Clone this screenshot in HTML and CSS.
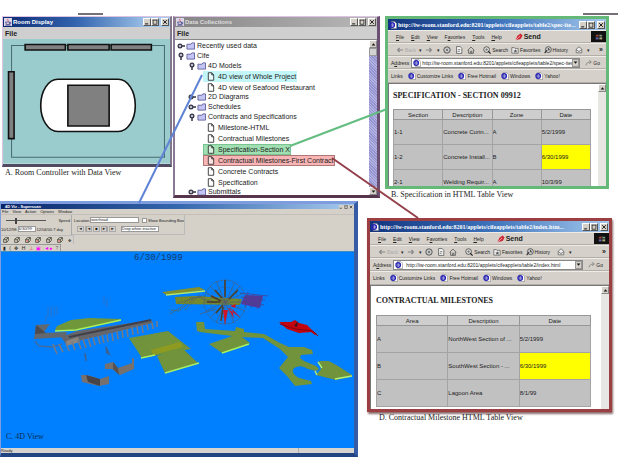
FILE: index.html
```html
<!DOCTYPE html>
<html lang="en">
<head>
<meta charset="utf-8">
<title>Room Display</title>
<link rel="stylesheet" href="styles.css">
</head>
<body>
<svg class="sprites" aria-hidden="true">
  <symbol id="folder" viewBox="0 0 10 9"><path d="M1 8V2.500h4.500l1-1.500h3V8z" fill="#c4c4f4" stroke="#5c5c9c"/></symbol>
  <symbol id="doc" viewBox="0 0 8 10"><path d="M1 .8h3.800L7 3.200V9.200H1zM4.800 1v2.200H7" fill="#fff" fill-opacity=".6" stroke="#333"/></symbol>
  <symbol id="closed" viewBox="0 0 8 8"><circle cx="3" cy="4" r="1.900" fill="#bbc" stroke="#334" stroke-width="1.200"/><path d="M5 4h3" stroke="#334" stroke-width="1.500"/></symbol>
  <symbol id="open" viewBox="0 0 8 8"><circle cx="4" cy="3" r="1.900" fill="#bbc" stroke="#334" stroke-width="1.200"/><path d="M4 5v3" stroke="#334" stroke-width="1.500"/></symbol>
  <symbol id="page" viewBox="0 0 10 10"><path d="M3 .5h4L9.500 3v6.500H3z" fill="#fff" stroke="#777" stroke-width=".7"/><circle cx="4" cy="5" r="2.800" fill="none" stroke="#2722b8" stroke-width="1.600"/><path d="M2 5h4.500" stroke="#2722b8" stroke-width="1.200"/></symbol>
  <symbol id="cup" viewBox="0 0 10 10"><path d="M0 0h10v10H0z" fill="#dcd6e6"/><path d="M5 1c-2 2 2 2 0 4" stroke="#d3445a" fill="none"/><path d="M2 5h5v3H3zM7 5.500h1.500v1.500H7M1.500 9h7" stroke="#4a4a8a" fill="none"/></symbol>
  <symbol id="min" viewBox="0 0 8 8"><path d="M1.500 6.500h4" stroke="#222" stroke-width="1.400"/></symbol>
  <symbol id="max" viewBox="0 0 8 8"><path d="M1 1.500h6M1.500 1v6h5V1" stroke="#222" fill="none"/></symbol>
  <symbol id="close" viewBox="0 0 8 8"><path d="M1.500 1.500l5 5M6.500 1.500l-5 5" stroke="#222" stroke-width="1.300"/></symbol>
  <symbol id="down" viewBox="0 0 8 8"><path d="M1 2.500h6L4 6z" fill="#111"/></symbol>
  <symbol id="up" viewBox="0 0 8 8"><path d="M1 5.500h6L4 2z" fill="#111"/></symbol>
  <symbol id="left" viewBox="0 0 10 8"><path d="M9 4H2M4.500 1.500L2 4l2.500 2.500" fill="none" stroke="#888" stroke-width="1.500"/></symbol>
  <symbol id="right" viewBox="0 0 10 8"><path d="M1 4h7M5.500 1.500L8 4 5.500 6.500" fill="none" stroke="#888" stroke-width="1.500"/></symbol>
  <symbol id="stop" viewBox="0 0 10 10"><circle cx="5" cy="5" r="4" fill="#ccc" stroke="#555" stroke-width="1.200"/><path d="M3.500 3.500l3 3M6.500 3.500l-3 3" stroke="#666"/></symbol>
  <symbol id="refresh" viewBox="0 0 10 10"><path d="M2 .8h4.500L8.500 3v6.200H2z" fill="#fff" stroke="#555"/><path d="M3.500 4.500h3L5.500 3.500M6.500 6.500h-3l1 1" stroke="#555" fill="none" stroke-width=".8"/></symbol>
  <symbol id="home" viewBox="0 0 10 10"><path d="M.8 5.500L5 1.300l4.200 4.200M2 5v4.200h6V5M4.500 9V6.500H6V9" fill="none" stroke="#555"/></symbol>
  <symbol id="search" viewBox="0 0 10 10"><circle cx="4.500" cy="4.500" r="3.600" fill="#ddd" stroke="#444"/><path d="M3 4.500h3M4.500 3v3" stroke="#666"/><path d="M6.500 6.500L9.500 9.500" stroke="#222" stroke-width="1.500"/></symbol>
  <symbol id="fav" viewBox="0 0 10 10"><path d="M1 2h3l1 1h4v6H1z" fill="#eee" stroke="#666"/><path d="M5.500 4l.8 1.600 1.700.1-1.300 1.100.4 1.700-1.600-.9-1.500.9.3-1.700L3 5.700l1.800-.1z" fill="#555"/></symbol>
  <symbol id="history" viewBox="0 0 10 10"><circle cx="5.500" cy="4.500" r="3.700" fill="#ccc" stroke="#444"/><path d="M5.500 2.500v2.300h2" stroke="#222" fill="none"/><path d="M.8 8.800l3-3.800" stroke="#333" stroke-width="1.500"/></symbol>
  <symbol id="mail" viewBox="0 0 10 10"><path d="M1.500 4L5 1l3.500 3v4.500h-7z" fill="#eee" stroke="#666"/><path d="M1.500 4.500L5 7l3.500-2.500" fill="none" stroke="#666"/></symbol>
  <symbol id="go" viewBox="0 0 12 10"><path d="M1.500 8.500C2 5 4 3.500 9 3.500M6.500 1L9.500 3.500 6.500 6" fill="none" stroke="#777" stroke-width="1.200"/></symbol>
  <symbol id="quill" viewBox="0 0 10 10"><path d="M.5 9.500L3 3.500 7 .5 9.500 3 7 7.500 3 8.500z" fill="#cf2531"/><path d="M.5 9.500l6-6" stroke="#fff" stroke-width=".7"/></symbol>
  <symbol id="flag" viewBox="0 0 10 8"><path d="M1 1.500L4.500 1v2.500H1z" fill="#a44"/><path d="M5.500 1L9 1.500v2H5.500z" fill="#798"/><path d="M1 4.500h3.500V7H1z" fill="#66a"/><path d="M5.500 4.500H9V7H5.500z" fill="#aa7"/></symbol>
  <symbol id="cube" viewBox="0 0 10 10"><path d="M1 4h5v5H1z" fill="#e5e0d8"/><path d="M1 4l3-3h5L6 4zM1 4v5h5V4M9 1v5L6 9" fill="none" stroke="#443" stroke-width="1.300"/><path class="face" d="M2.500 5.500h2v2h-2z"/></symbol>
</svg>

<main class="desktop">
  <i class="edge edge-left"></i>
  <i class="edge edge-right"></i>

  <section class="frame room">
    <header class="bar bar-java">
      <svg class="app"><use href="#cup"/></svg><span class="name">Room Display</span>
      <button class="ctl" aria-label="Minimize"><svg><use href="#min"/></svg></button><button class="ctl" aria-label="Maximize"><svg><use href="#max"/></svg></button><button class="ctl ctl-close" aria-label="Close"><svg><use href="#close"/></svg></button>
    </header>
    <nav class="menu-java"><button>File</button></nav>
    <svg class="plan" viewBox="0 0 166 124" role="img" aria-label="Room plan">
      <path d="M0 0h166v124H0z" fill="#9accce"/>
      <path d="M8.500 6.500h152v111h-152z" fill="none" stroke="#486b70"/>
      <g fill="#808080" stroke="#111" stroke-width="1.600">
        <path d="M22 5.500h40v5.500H22zM64.500 5.500h41v5.500h-41zM107.500 5.500h40v5.500h-40zM5.500 32.500h5.500V99H5.500z"/>
        <rect x="37.500" y="40" width="94" height="52" rx="17" ry="26" fill="#fff"/>
        <path d="M64.500 46h41v40.500h-41z"/>
      </g>
    </svg>
  </section>
  <p class="caption cap-a">A. Room Controller with Data View</p>

  <section class="frame data">
    <header class="bar bar-idle">
      <svg class="app"><use href="#cup"/></svg><span class="name">Data Collections</span>
      <button class="ctl" aria-label="Minimize"><svg><use href="#min"/></svg></button><button class="ctl" aria-label="Maximize"><svg><use href="#max"/></svg></button><button class="ctl ctl-close" aria-label="Close"><svg><use href="#close"/></svg></button>
    </header>
    <nav class="menu-java"><button>File</button></nav>
    <div class="pane">
      <ul class="tree">
        <li><div class="row"><svg class="knob"><use href="#closed"/></svg><svg class="folder"><use href="#folder"/></svg>Recently used data</div></li>
        <li><div class="row"><svg class="knob"><use href="#open"/></svg><svg class="folder"><use href="#folder"/></svg>Cife</div>
          <ul class="branch">
            <li><div class="row"><svg class="knob"><use href="#open"/></svg><svg class="folder"><use href="#folder"/></svg>4D Models</div>
              <ul class="leaves">
                <li><span class="leaf mark-blue"><svg><use href="#doc"/></svg>4D view of Whole Project</span></li>
                <li><span class="leaf"><svg><use href="#doc"/></svg>4D view of Seafood Restaurant</span></li>
              </ul></li>
            <li><div class="row"><svg class="knob"><use href="#closed"/></svg><svg class="folder"><use href="#folder"/></svg>2D Diagrams</div></li>
            <li><div class="row"><svg class="knob"><use href="#closed"/></svg><svg class="folder"><use href="#folder"/></svg>Schedules</div></li>
            <li><div class="row"><svg class="knob"><use href="#open"/></svg><svg class="folder"><use href="#folder"/></svg>Contracts and Specifications</div>
              <ul class="leaves">
                <li><span class="leaf"><svg><use href="#doc"/></svg>Milestone-HTML</span></li>
                <li><span class="leaf"><svg><use href="#doc"/></svg>Contractual Milestones</span></li>
                <li><span class="leaf mark-green"><svg><use href="#doc"/></svg>Specification-Section X</span></li>
                <li><span class="leaf mark-red"><svg><use href="#doc"/></svg>Contractual Milestones-First Contract</span></li>
                <li><span class="leaf"><svg><use href="#doc"/></svg>Concrete Contracts</span></li>
                <li><span class="leaf"><svg><use href="#doc"/></svg>Specification</span></li>
              </ul></li>
            <li><div class="row"><svg class="knob"><use href="#closed"/></svg><svg class="folder"><use href="#folder"/></svg>Submittals</div></li>
          </ul></li>
      </ul>
      <div class="scroll scroll-java"><button aria-label="Scroll up"><svg><use href="#up"/></svg></button><i class="thumb"></i><i class="track"></i><button aria-label="Scroll down"><svg><use href="#down"/></svg></button></div>
    </div>
  </section>

  <section class="browser spec">
    <header class="bar bar-ie">
      <svg class="app"><use href="#page"/></svg><span class="name">http://iw-room.stanford.edu:8201/applets/cifeapplets/table2/spec-ite...</span>
      <button class="ctl" aria-label="Minimize"><svg><use href="#min"/></svg></button><button class="ctl" aria-label="Maximize"><svg><use href="#max"/></svg></button><button class="ctl ctl-close" aria-label="Close"><svg><use href="#close"/></svg></button>
    </header>
    <nav class="strip menus"><button><u>F</u>ile</button><button><u>E</u>dit</button><button><u>V</u>iew</button><button>F<u>a</u>vorites</button><button><u>T</u>ools</button><button><u>H</u>elp</button><button class="send"><svg><use href="#quill"/></svg>Send</button><span class="throbber"><svg><use href="#flag"/></svg></span></nav>
    <div class="strip tools"><button class="dim"><svg><use href="#left"/></svg>Back</button><i>▾</i><button aria-label="Forward"><svg><use href="#right"/></svg></button><i>▾</i><button aria-label="Stop"><svg><use href="#stop"/></svg></button><button aria-label="Refresh"><svg><use href="#refresh"/></svg></button><button aria-label="Home"><svg><use href="#home"/></svg></button><button class="lead"><svg><use href="#search"/></svg>Search</button><button><svg><use href="#fav"/></svg>Favorites</button><button><svg><use href="#history"/></svg>History</button><button class="lead" aria-label="Mail"><svg><use href="#mail"/></svg></button><i>▾</i><b>»</b></div>
    <div class="strip address"><label for="url-spec">A<u>d</u>dress</label><span class="field"><svg><use href="#page"/></svg><input id="url-spec" value="http://iw-room.stanford.edu:8201/applets/cifeapplets/table2/spec-items.htm"><button aria-label="Show addresses"><svg><use href="#down"/></svg></button></span><button class="go"><svg><use href="#go"/></svg>Go</button></div>
    <nav class="strip links"><span>Links</span><a href="#"><svg><use href="#page"/></svg>Customize Links</a><a href="#"><svg><use href="#page"/></svg>Free Hotmail</a><a href="#"><svg><use href="#page"/></svg>Windows</a><a href="#"><svg><use href="#page"/></svg>Yahoo!</a></nav>
    <div class="view">
      <article>
        <h2>SPECIFICATION - SECTION 09912</h2>
        <table>
          <thead><tr><th>Section</th><th>Description</th><th>Zone</th><th>Date</th></tr></thead>
          <tbody>
            <tr><td>1-1</td><td>Concrete Curin...</td><td>A</td><td>5/2/1999</td></tr>
            <tr><td>1-2</td><td>Concrete Install...</td><td>B</td><td class="today">6/30/1999</td></tr>
            <tr><td>2-1</td><td>Welding Requir...</td><td>A</td><td>10/3/99</td></tr>
          </tbody>
        </table>
      </article>
      <div class="scroll"><button aria-label="Scroll up"><svg><use href="#up"/></svg></button><i class="track"></i></div>
    </div>
  </section>
  <p class="caption cap-b">B. Specification in HTML Table View</p>

  <section class="browser milestones">
    <header class="bar bar-ie">
      <svg class="app"><use href="#page"/></svg><span class="name">http://iw-room.stanford.edu:8201/applets/cifeapplets/table2/index.htm...</span>
      <button class="ctl" aria-label="Minimize"><svg><use href="#min"/></svg></button><button class="ctl" aria-label="Maximize"><svg><use href="#max"/></svg></button><button class="ctl ctl-close" aria-label="Close"><svg><use href="#close"/></svg></button>
    </header>
    <nav class="strip menus"><button><u>F</u>ile</button><button><u>E</u>dit</button><button><u>V</u>iew</button><button>F<u>a</u>vorites</button><button><u>T</u>ools</button><button><u>H</u>elp</button><button class="send"><svg><use href="#quill"/></svg>Send</button><span class="throbber"><svg><use href="#flag"/></svg></span></nav>
    <div class="strip tools"><button class="dim"><svg><use href="#left"/></svg>Back</button><i>▾</i><button aria-label="Forward"><svg><use href="#right"/></svg></button><i>▾</i><button aria-label="Stop"><svg><use href="#stop"/></svg></button><button aria-label="Refresh"><svg><use href="#refresh"/></svg></button><button aria-label="Home"><svg><use href="#home"/></svg></button><button class="lead"><svg><use href="#search"/></svg>Search</button><button><svg><use href="#fav"/></svg>Favorites</button><button><svg><use href="#history"/></svg>History</button><button class="lead" aria-label="Mail"><svg><use href="#mail"/></svg></button><i>▾</i><b>»</b></div>
    <div class="strip address"><label for="url-mile">A<u>d</u>dress</label><span class="field"><svg><use href="#page"/></svg><input id="url-mile" value="http://iw-room.stanford.edu:8201/applets/cifeapplets/table2/index.html"><button aria-label="Show addresses"><svg><use href="#down"/></svg></button></span><button class="go"><svg><use href="#go"/></svg>Go</button></div>
    <nav class="strip links"><span>Links</span><a href="#"><svg><use href="#page"/></svg>Customize Links</a><a href="#"><svg><use href="#page"/></svg>Free Hotmail</a><a href="#"><svg><use href="#page"/></svg>Windows</a><a href="#"><svg><use href="#page"/></svg>Yahoo!</a></nav>
    <div class="view">
      <article>
        <h2>CONTRACTUAL MILESTONES</h2>
        <table>
          <thead><tr><th>Area</th><th>Description</th><th>Date</th></tr></thead>
          <tbody>
            <tr><td>A</td><td>NorthWest Section of ...</td><td>5/2/1999</td></tr>
            <tr><td>B</td><td>SouthWest Section - ...</td><td class="today">6/30/1999</td></tr>
            <tr><td>C</td><td>Lagoon Area</td><td>8/1/99</td></tr>
          </tbody>
        </table>
      </article>
      <div class="scroll"><button aria-label="Scroll up"><svg><use href="#up"/></svg></button><i class="track"></i></div>
    </div>
  </section>
  <p class="caption cap-d">D. Contractual Milestone HTML Table View</p>

  <section class="model">
    <header class="bar-model"><span>4D Viz - Superscan</span><button aria-label="Minimize"><svg><use href="#min"/></svg></button><button aria-label="Maximize"><svg><use href="#max"/></svg></button><button aria-label="Close"><svg><use href="#close"/></svg></button></header>
    <nav class="model-menu"><button>File</button><button>View</button><button>Action</button><button>Options</button><button>Window</button></nav>
    <div class="panels">
      <div class="time">
        <div class="slide"><input type="range" min="0" max="100" value="24" aria-label="Time"><span>Speed</span></div>
        <div class="dates"><span>10/12/98</span><select aria-label="Date"><option>6/30/99</option></select><span>12/04/00</span><span>7 day</span></div>
      </div>
      <div class="play">
        <div class="pick"><label for="loc">Location</label><select id="loc"><option>overhead</option></select><input type="checkbox" id="box"><label for="box">Show Bounding Box</label></div>
        <div class="pick transport"><button aria-label="Rewind">◄</button><button aria-label="Back">|◄</button><button aria-label="Stop">■</button><button aria-label="Next">►|</button><button aria-label="Play">►</button><select aria-label="Drawing"><option>Drop when inactive</option></select></div>
      </div>
    </div>
    <div class="cubes"><button aria-label="Front"><svg><use href="#cube"/></svg></button><button aria-label="Side"><svg><use href="#cube"/></svg></button><button class="hot" aria-label="Top"><svg><use href="#cube"/></svg></button><button class="hot" aria-label="Back"><svg><use href="#cube"/></svg></button><button aria-label="Left"><svg><use href="#cube"/></svg></button><button class="hot" aria-label="Bottom"><svg><use href="#cube"/></svg></button><button aria-label="Fit">✥</button></div>
    <div class="modes"><button>▮</button><button>⟨</button><button>✥</button><button>H</button><button class="red">⊥</button><button class="pink">▣</button><button class="pink">◄●</button><button class="help">?</button></div>
    <svg class="scene" viewBox="1 251 353 197" role="img" aria-label="Construction model">
      <path d="M1 251h353v197H1z" fill="#007fff"/>
      <path d="M1 251.500h353" stroke="#3e8cc4"/>
      <text x="134" y="260" class="stamp">6/30/1999</text>
      <g stroke="#3f6fae" stroke-width=".7"><path d="M48 307v9M51 306v12M54 306v10M57 307v8M47 315l-2 8M104 296v9M107 299v8"/></g>
      <path d="M36 325l14-1-7 9 24-1-1 5-32 2z" fill="#62686f"/><path d="M36 325l10 8-11 1z" fill="#4c4b50"/>
      <path d="M35 341l4 5 13 1 10-3" fill="none" stroke="#426b9e" stroke-width="1.300"/>
      <path d="M55 330l2-4 14-6 18-2 32 1-1 2-44 9-20 1z" fill="#70983b"/>
      <path d="M55 331l21-1 45-10" fill="none" stroke="#a9ef5b" stroke-width="1.500"/>
      <path d="M61 337l16-6 74-11 2 3-87 21z" fill="#65666c"/><path d="M69 337L151 320" stroke="#413f48" stroke-width="2"/><path d="M66 341l12-4 2 5-14 4z" fill="#8b8580"/>
      <path d="M53 344l4 10M59 344l4 8M66 343l3 8M72 342l3 8M78 340l3 9M83 339l3 9M88 338l3 9M93 337l2 8M98 336l2 8M102 335l2 8M107 334l1 8M112 333l1 8M117 331l1 8M122 330l1 8M127 329l1 8M132 327l1 8M137 326l1 8M142 325l1 8M147 324l1 6M152 323l1 6M157 321v6" stroke="#747a85" stroke-width="1.600"/>
      <path d="M85 353l1 8M106 347l3 7-2-1z" stroke="#3d618f" stroke-width="1.500"/>
      <path d="M81 375l6 0 13 4 9-3v8l-10 2-17-4z" fill="#77716e"/><path d="M86 375l14 4v7l-12-4z" fill="#474449"/>
      <path d="M105 364l8-2 5 6 14-5 0-5 2 1v10l-14 6-8-6-7 0z" fill="#77716e"/><path d="M113 362l5 6 1 7-6-6z" fill="#57524f"/>
      <path d="M129 338l39-7 23 18-49 9z" fill="#70933b"/><path d="M157 356l24-9 17 16-33 10z" fill="#70933b"/>
      <path d="M151 350l29-8 3 5-30 8z" fill="#8f9b20"/><path d="M141 358l14-3M165 373l34-10" stroke="#a8ee60" stroke-width="1.500"/>
      <path d="M162 292l37-5 6 3-39 5z" fill="#82902d"/><path d="M166 295l39-4" stroke="#b0e66a" stroke-width="1.400"/>
      <path d="M175 297l20-1 47 3-2 6-64-1z" fill="#75882c"/>
      <path d="M170 314l10-6 10-10 16-2M171 310l8 1 14-12M178 303l24-7M185 310l15-16" fill="none" stroke="#56655e" stroke-dasharray="2 1"/>
      <g fill="none" stroke="#505d70" stroke-width=".7"><ellipse cx="225" cy="302" rx="21" ry="22" stroke-dasharray="3 1"/><ellipse cx="225" cy="302" rx="14" ry="15" stroke-dasharray="1 1"/><path d="M225 280v44M204 302h42M210 286l30 32M240 286l-30 32M216 281l18 42M235 282l-19 41M206 293l39 18M206 311l38-18M216 303l-18-6M216 309l-16 5"/></g>
      <path d="M225 280v17M211 296l10 5M215 290l7 8M216 313l7-8M207 302h13M238 290l-9 9M221 321l2-14" stroke="#4d3d24" stroke-width="1.500"/>
      <path d="M223 310l5 0-3 15zM227 308l5 1 9 9zM230 306l6-2-1 4zM229 310l5 9-2-10z" fill="#cd1527"/>
      <path d="M245 295l18 1-3 12-19-4z" fill="#56389c"/><path d="M240 293l28 3M241 297l24 3M243 302l21 3M248 292l-3 15M254 294l-3 14M260 295l-3 14" stroke="#45458a" stroke-width=".8"/>
      <path d="M279 322l12 0 4-2 4 3 8 2 6 6 4 3-2 1-4-3-12 1-12-4z" fill="#c3030d"/><path d="M280 324l15 5 18 2M313 331l5 5" fill="none" stroke="#840515"/><path d="M294 326l4-5-1 6z" fill="#40141d"/>
      <path d="M196 322L204 322 205 329 235 331 236 327 244 329 244 332 264 334 280 343 289 347 304 347 312 350 313 354 301 355 300 358 304 361 316 366 319 369 316 371 308 369Q301 364 294 368Q290 373 299 378L311 381 312 384 295 386 287 376 279 368 288 357 280 349 263 338 240 337 200 332 197 331z" fill="#70933b"/>
      <path d="M209 344l29-10 12 9-28 10z" fill="#70933b"/><path d="M222 353l27-9" stroke="#a9ef5b" stroke-width="1.500"/>
      <path d="M319 361l10 0 9 5 14 9v1l-16 4-20-5 5-6z" fill="#70933b"/><path d="M318 362l4 6M315 371l2 4M335 379l17-3" stroke="#b1f274" stroke-width="1.400"/>
      <text x="6" y="439" class="scene-caption">C. 4D View</text>
    </svg>
    <footer><span>Ready</span><i></i></footer>
  </section>

  <svg class="lines" aria-hidden="true">
    <path d="M202 75L139 203" stroke="#5f83d6"/>
    <path d="M290 146l97-37" stroke="#63bd80"/>
    <path d="M332 158l86 60" stroke="#93404a"/>
  </svg>
</main>
</body>
</html>
```
FILE: styles.css
```css
* { box-sizing: border-box; }
body { margin: 0; background: #fff; color: #222; font-family: "Liberation Sans", sans-serif; font-size: 6px; }
button, input, select { margin: 0; padding: 0; border: 0; border-radius: 0; background: none; color: inherit; font: inherit; }
button, a { display: inline-flex; align-items: center; white-space: nowrap; }
a { color: inherit; text-decoration: none; }
ul { margin: 0; padding: 0; list-style: none; }
i { font-style: normal; }
svg { flex: none; }
.sprites { position: absolute; width: 0; height: 0; }

.desktop { position: relative; min-height: 100vh; overflow: hidden; }
.edge { position: absolute; top: 13px; height: 2px; background: #777079; }
.edge-left { left: 78px; width: 25px; }
.edge-right { left: 583px; width: 35px; }

.frame, .browser, .model { position: absolute; display: flex; flex-direction: column; }
.room { left: 2px; top: 16px; width: 170px; border: 1px solid #dcc4e2; border-right: 2px solid #80788a; border-bottom: 3px solid #504b62; }
.data { left: 173px; top: 16px; width: 207px; height: 182px; border: 1px solid #dcc4e2; border-right: 3px solid #6b4f72; border-bottom: 3px solid #57354c; border-left: 2px solid #8b7894; }
.spec { left: 385px; top: 16px; width: 224px; height: 173px; border: 3px solid #64b878; }
.milestones { left: 367px; top: 218px; width: 245px; height: 194px; border: 3px solid #9b3f43; box-shadow: 1px 2px 2px #8a6a6a; }

.bar { display: flex; align-items: center; height: 10px; padding: 0 1px; color: #fff; font-weight: bold; }
.bar .app { width: 8px; height: 8px; margin-right: 1px; }
.bar .name { flex: 1; overflow: hidden; white-space: nowrap; }
.bar-java { background: linear-gradient(90deg, #0b2a74, #3566b0 45%, #a5c9ec 90%); }
.bar-idle { background: linear-gradient(90deg, #858585, #b9b9b9); color: #ddd; }
.bar-ie { height: 11px; background: linear-gradient(90deg, #12357f, #3d73bb 50%, #a4c8ec); font: bold 6px "Liberation Serif", serif; }
.ctl { flex: none; justify-content: center; width: 8px; height: 8px; background: #d4d0c8; border: 1px solid; border-color: #fff #555 #555 #fff; }
.ctl svg { width: 6px; height: 6px; }
.ctl-close { margin-left: 2px; }
.menu-java { display: flex; align-items: center; height: 12px; padding: 0 2px; background: #cfcfcf; font-weight: bold; font-size: 7px; }
.plan { display: block; width: 100%; height: auto; }

.pane { display: flex; flex: 1; min-height: 0; background: #fff; border-top: 1px solid #888; overflow: hidden; }
.tree { flex: 1; padding-top: 1px; font-size: 7px; line-height: 10px; white-space: nowrap; }
.row { display: flex; align-items: center; height: 10px; padding-left: 2px; }
.knob { width: 8px; height: 8px; margin-right: 1px; }
.folder { width: 9px; height: 8px; margin-right: 2px; }
.branch { padding-left: 11px; }
.leaves { display: flex; flex-direction: column; gap: 1px; padding-left: 17px; }
.leaves li { display: flex; height: 10px; align-items: center; }
.leaf { display: inline-flex; align-items: center; padding: 1px 1px 1px 4px; line-height: 9px; }
.leaf svg { width: 8px; height: 9px; margin-right: 3px; }
.mark-blue { background: #c3f6f8; }
.mark-green { background: #9fdfb1; outline: 1px solid #79c391; outline-offset: -1px; }
.mark-red { background: #f9b5b5; outline: 1px solid #b07777; outline-offset: -1px; }
.scroll { display: flex; flex: none; flex-direction: column; width: 8px; background: #e8e6e2; }
.scroll button { justify-content: center; width: 8px; height: 8px; background: #d4d0c8; border: 1px solid; border-color: #fff #888 #888 #fff; }
.scroll svg { width: 5px; height: 5px; }
.scroll .track { flex: 1; }
.scroll .thumb { height: 8px; background: #d2d2d2; border: 1px solid #999; }
.scroll-java .track { background: repeating-linear-gradient(45deg, #9494d0 0 1px, #b2b2e2 1px 2px); }

.strip { display: flex; flex: none; align-items: center; height: 13px; padding: 0 3px; background: #d5d1ca; border-top: 1px solid #eeece8; border-bottom: 1px solid #b3afa8; font-size: 5px; white-space: nowrap; }
.strip svg { width: 8px; height: 8px; }
.menus { gap: 7px; padding: 0 0 0 8px; }
.menus .send { gap: 1px; margin-left: 6px; font-size: 7px; font-weight: bold; }
.throbber { display: flex; align-items: center; justify-content: center; width: 15px; height: 11px; margin-left: auto; background: #111; }
.tools { gap: 3px; padding-left: 8px; }
.tools svg { margin-right: 1px; }
.tools .dim { color: #aaa; }
.tools .lead { margin-left: 4px; }
.tools b { margin-left: auto; font-size: 7px; }
.address { gap: 2px; }
.field { display: flex; flex: 1; align-items: center; min-width: 0; height: 10px; padding-left: 1px; background: #fff; border: 1px solid #888; }
.field input { flex: 1; width: 0; height: 8px; margin-left: 3px; outline: 0; }
.field button { justify-content: center; width: 7px; height: 8px; background: #d4d0c8; border: 1px solid #999; }
.field button svg { width: 5px; height: 5px; }
.spec .field input { margin-left: 1px; }
.address .go { margin: 0 3px; }
.links { height: 14px; gap: 5px; }
.links a { gap: 1px; }

.view { display: flex; flex: 1; min-height: 0; overflow: hidden; background: #fff; border-top: 1px solid #777; border-left: 1px solid #777; }
.view article { flex: 1; min-width: 0; padding: 0 7px 0 4px; }
.view h2 { margin: 7px 0 9px; font: bold 8px/9px "Liberation Serif", serif; white-space: nowrap; }
.view table { width: 100%; border-collapse: collapse; table-layout: fixed; background: #c1c1c1; }
.view th { height: 10px; padding: 0; border: 1px solid #979797; background: #cecece; font-weight: normal; }
.view td { height: 25px; padding: 0; border: 1px solid #a4a4a4; overflow: hidden; white-space: nowrap; }
.view .today { background: #ff0; }
.milestones .view article { padding: 0 10px 0 5px; }
.milestones .view h2 { margin: 10px 0; }
.milestones .view td { height: 27px; }

.caption { position: absolute; margin: 0; font: 8px/10px "Liberation Serif", serif; white-space: nowrap; }
.cap-a { left: 5px; top: 168px; }
.cap-b { left: 391px; top: 190px; }
.cap-d { left: 379px; top: 413px; }

.model { left: 0; top: 201px; width: 358px; background: #d5d1c9; border: 3px solid #7e9ddf; border-width: 3px 4px 4px 1px; border-right-color: #375ca6; border-bottom-color: #234482; font-size: 4px; white-space: nowrap; }
.bar-model { display: flex; align-items: center; height: 5px; padding-left: 4px; background: linear-gradient(90deg, #0a2468, #3567ad 50%, #a8caee); color: #fff; font-weight: bold; }
.bar-model span { flex: 1; }
.bar-model button { width: 5px; height: 4px; background: #d4d0c8; }
.bar-model svg { width: 4px; height: 4px; }
.model-menu { display: flex; gap: 4px; height: 6px; padding-left: 1px; border-bottom: 1px solid #c4c0b9; }
.panels { display: flex; height: 20px; }
.time { display: flex; flex-direction: column; justify-content: space-evenly; width: 71px; border-right: 1px solid #aaa; }
.slide, .dates, .pick { display: flex; align-items: center; gap: 1px; }
.slide { justify-content: space-between; padding: 0 1px 0 5px; }
.slide input { width: 40px; height: 6px; appearance: none; background: linear-gradient(#555, #555) center / 100% 1px no-repeat; }
.slide input::-webkit-slider-thumb { appearance: none; width: 2px; height: 6px; background: #444; }
.model select { height: 6px; background: #fff; border: 1px solid #999; appearance: none; line-height: 4px; }
.dates select { width: 18px; }
.play { display: flex; flex-direction: column; justify-content: space-evenly; width: 113px; padding-left: 2px; border-right: 1px solid #bbb; border-bottom: 1px solid #bbb; }
.pick #loc { width: 52px; margin-right: 2px; }
.pick input { width: 5px; height: 5px; appearance: none; background: #fff; border: 1px solid #999; }
.transport { padding-left: 3px; }
.transport button { justify-content: center; width: 7px; height: 6px; border: 1px solid #aaa; color: #111; }
.transport select { width: 38px; margin-left: 4px; }
.cubes { display: flex; align-items: center; justify-content: space-around; width: 73px; height: 9px; border: 1px solid #bbb; border-width: 1px 1px 0 0; }
.cubes svg { width: 6px; height: 6px; fill: #988; }
.cubes .hot svg { fill: #c22; }
.modes { display: flex; align-items: center; justify-content: space-around; width: 60px; height: 7px; border: 1px solid #999; border-width: 1px 1px 0 0; font-size: 5px; }
.modes .red { color: #c22; }
.modes .pink { color: #f0f; }
.modes .help { color: #666; }
.scene { display: block; width: 100%; height: auto; }
.stamp { font: 9px "Liberation Mono", monospace; fill: #123c68; }
.scene-caption { font: 8px "Liberation Serif", serif; fill: #0a3055; }
.model footer { display: flex; justify-content: space-between; height: 5px; background: #d6d4d0; }
.model footer i { width: 56px; border: 1px solid #aaa; border-width: 0 0 0 1px; }
.lines { position: absolute; inset: 0; width: 100%; height: 100%; pointer-events: none; fill: none; stroke-width: 2; }
```
